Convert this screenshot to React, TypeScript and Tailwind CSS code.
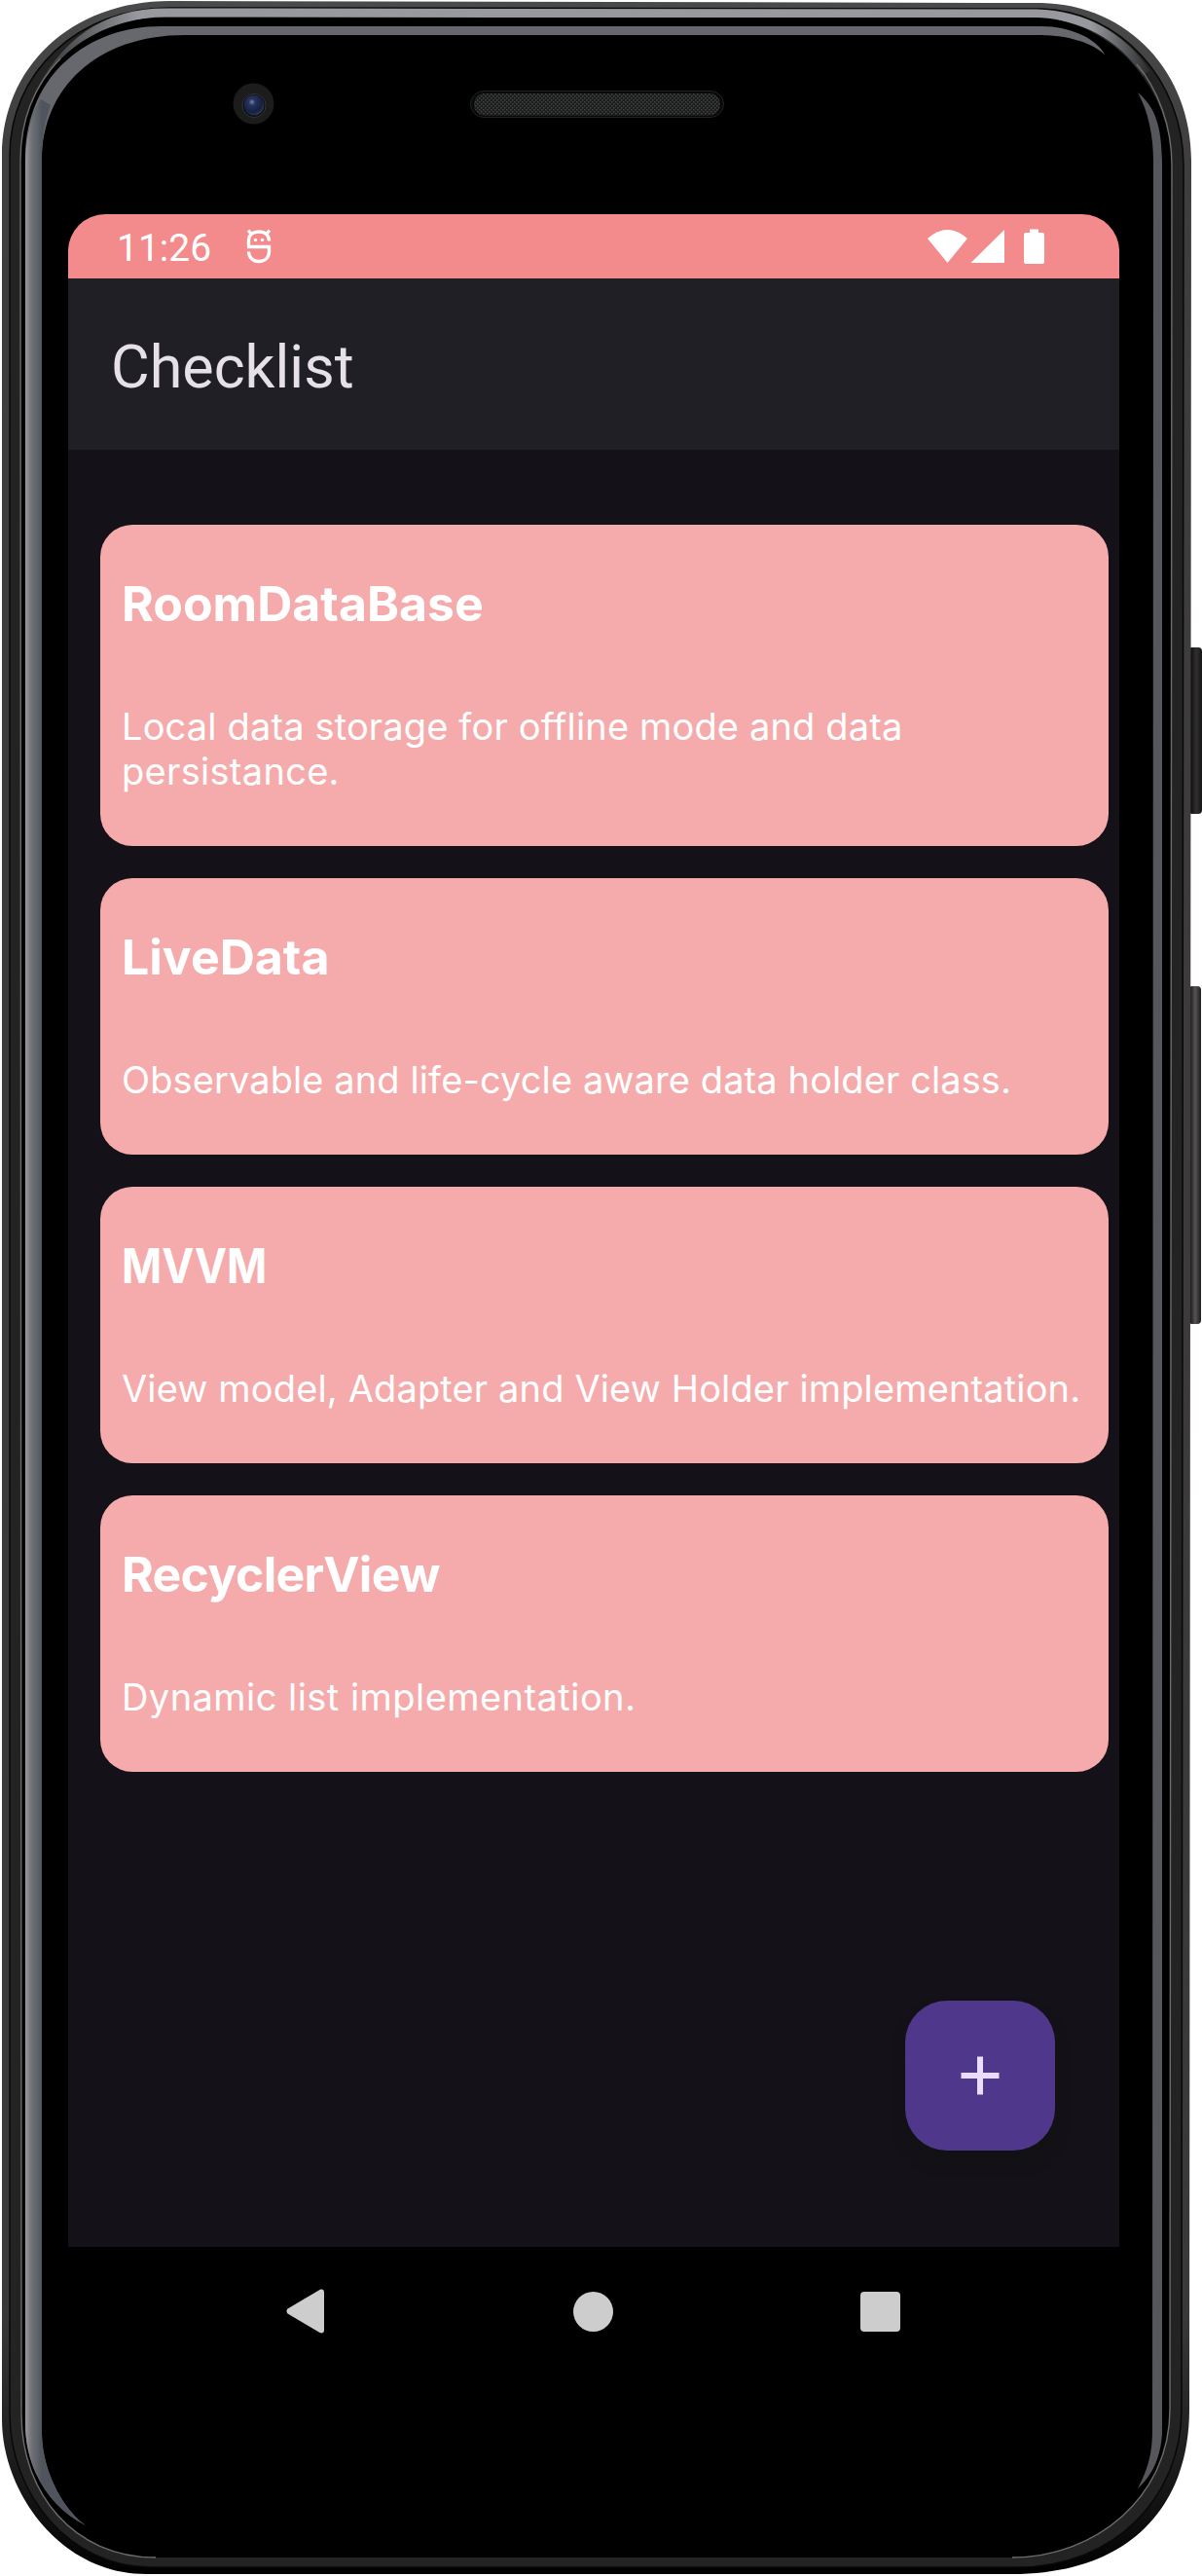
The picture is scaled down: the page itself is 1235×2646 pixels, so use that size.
import React from "react";

type Item = { title: string; lines: string[]; titleClass: string; lineClass: string[] };

const items: Item[] = [
  {
    title: "RoomDataBase",
    lines: ["Local data storage for offline mode and data", "persistance."],
    titleClass: "",
    lineClass: ["tracking-[0.15px]", "tracking-[0.3px]"],
  },
  {
    title: "LiveData",
    lines: ["Observable and life-cycle aware data holder class."],
    titleClass: "",
    lineClass: ["tracking-[0.1px]"],
  },
  {
    title: "MVVM",
    lines: ["View model, Adapter and View Holder implementation."],
    titleClass: "inline-block origin-left scale-x-[0.885]",
    lineClass: ["tracking-[0.14px]"],
  },
  {
    title: "RecyclerView",
    lines: ["Dynamic list implementation."],
    titleClass: "tracking-[-0.7px]",
    lineClass: ["tracking-[0.45px]"],
  },
];

/* The handset: body, metal rim, glass reflections, camera and speaker. */
function Handset() {
  return (
    <svg className="absolute inset-0" width="1235" height="2646" viewBox="0 0 1235 2646" fill="none">
      <defs>
        <linearGradient id="rim" x1="0" y1="0" x2="0" y2="2646" gradientUnits="userSpaceOnUse">
          <stop offset="0" stopColor="#4a4a4a" />
          <stop offset="0.06" stopColor="#3f3d3d" />
          <stop offset="0.9" stopColor="#3a3838" />
          <stop offset="0.96" stopColor="#1a1a1a" />
          <stop offset="1" stopColor="#000" />
        </linearGradient>
        <linearGradient id="topShine" x1="0" y1="100" x2="1180" y2="100" gradientUnits="userSpaceOnUse">
          <stop offset="0.03" stopColor="#2c2d2f" />
          <stop offset="0.12" stopColor="#97999e" />
          <stop offset="0.95" stopColor="#97999e" />
          <stop offset="1" stopColor="#2c2d2f" />
        </linearGradient>
        <linearGradient id="leftShine" x1="26" y1="0" x2="43" y2="0" gradientUnits="userSpaceOnUse">
          <stop offset="0" stopColor="#9a9a9a" />
          <stop offset="0.35" stopColor="#71747a" />
          <stop offset="1" stopColor="#50545c" />
        </linearGradient>
        <linearGradient id="power" x1="1223" y1="0" x2="1235" y2="0" gradientUnits="userSpaceOnUse">
          <stop offset="0" stopColor="#0c0c0c" />
          <stop offset="0.5" stopColor="#303030" />
          <stop offset="1" stopColor="#161616" />
        </linearGradient>
        <linearGradient id="volume" x1="1222" y1="0" x2="1234" y2="0" gradientUnits="userSpaceOnUse">
          <stop offset="0" stopColor="#111" />
          <stop offset="0.5" stopColor="#555" />
          <stop offset="1" stopColor="#1b1b1b" />
        </linearGradient>
        <radialGradient id="lens" cx="0.4" cy="0.35" r="0.65">
          <stop offset="0" stopColor="#7784a8" />
          <stop offset="0.25" stopColor="#27345f" />
          <stop offset="0.75" stopColor="#16203f" />
          <stop offset="1" stopColor="#2c3850" />
        </radialGradient>
        <pattern id="mesh" width="4" height="4" patternUnits="userSpaceOnUse">
          <rect width="4" height="4" fill="#1b1c1c" />
          <rect width="1.500" height="1.500" fill="#444646" />
          <rect x="2" y="2" width="1.500" height="1.500" fill="#444646" />
        </pattern>
      </defs>
      <rect x="1221" y="665" width="14" height="171" rx="4" fill="url(#power)" />
      <rect x="1221" y="1013" width="13" height="347" rx="4" fill="url(#volume)" />
      <path d="M2 160C2 70 72 1 175 1L1070 3C1160 5 1224 75 1224 165L1222 2475C1222 2575 1160 2644 1040 2644H150C62 2644 2 2560 2 2485Z" fill="url(#rim)" />
      <path d="M10 160C10 75 80 8 175 8L1070 9C1150 11 1216 82 1216 170L1214 2475C1214 2565 1145 2637 1045 2637H155C70 2637 10 2560 10 2480Z" fill="#232323" stroke="#080808" strokeWidth="1.500" />
      <path d="M36 105C62 48 105 13 170 13L1065 14C1120 16 1155 42 1178 75" stroke="url(#topShine)" strokeWidth="9" />
      <path d="M21 165C21 80 85 18 170 18H1062C1140 18 1204 90 1204 170L1202 2475C1202 2565 1125 2627 1040 2627H160C75 2627 22 2560 22 2480Z" fill="#000" />
      <path d="M160 2627C75 2627 22 2560 22 2480L21 165C21 120 38 85 62 60M1168 66C1190 92 1204 130 1204 170L1202 2475C1202 2565 1125 2627 1040 2627" stroke="#6c6c6c" strokeWidth="1.400" />
      <path d="M26 160C28 75 92 27 165 27H1070C1100 27 1127 40 1135 56C1118 41 1092 36 1065 36H190C100 36 43 90 43 165V2500C44 2540 65 2578 88 2594C50 2575 26 2535 26 2490Z" fill="#66686e" />
      <path d="M26 165C27 140 32 118 42 102L52 108C46 125 43 140 43 165V2500C44 2540 65 2578 88 2594C50 2575 26 2535 26 2490Z" fill="url(#leftShine)" />
      <path d="M1169 95C1188 111 1193 130 1194 165V2500C1192 2530 1180 2546 1169 2556C1180 2535 1184 2520 1184 2495L1185 165C1185 140 1180 115 1169 95Z" fill="#55575d" />
      <circle cx="260.500" cy="106.500" r="21" fill="#1c1c1d" />
      <circle cx="261" cy="108.500" r="12" fill="#090b10" stroke="#34363b" strokeWidth="1" />
      <circle cx="261" cy="108" r="10.500" fill="url(#lens)" />
      <rect x="483.500" y="93.500" width="260" height="27" rx="13.500" fill="#090909" stroke="#222225" />
      <rect x="487" y="96" width="253" height="22.500" rx="11" fill="url(#mesh)" />
    </svg>
  );
}

function StatusBar() {
  return (
    <div className="flex h-[66px] items-center bg-[#f38a8b] pl-[50px] pr-[77px] text-white">
      <span className="w-[133px] pt-[3px] text-[39px] leading-[66px]">11:26</span>
      <svg width="26" height="36" viewBox="0 0 26 36" fill="none" stroke="currentColor" strokeWidth="3.400">
        <path d="M2.500 18.500V12C2.500 6 7 3 13 3S23.500 6 23.500 12.500M1 18.500H23.500V23C23.500 30 19 33.500 13 33.500S2.500 29.500 2.500 23.500" />
        <path d="M2 1.500L5 5M24 1.500L21 5" />
        <circle cx="9.500" cy="11.500" r="1.800" fill="currentColor" stroke="none" />
        <circle cx="16.500" cy="11.500" r="1.800" fill="currentColor" stroke="none" />
      </svg>
      <svg className="ml-auto" width="120" height="36" viewBox="0 0 120 36" fill="currentColor">
        <path d="M0 10Q20.500 -8 41 10L20.500 35Z" />
        <path d="M44.500 35L79 1V35Z" />
        <path d="M105 .5h9v3.500h4a2 2 0 0 1 2 2v28a2 2 0 0 1-2 2h-17a2 2 0 0 1-2-2v-28a2 2 0 0 1 2-2h4z" />
      </svg>
    </div>
  );
}

function Card({ item }: { item: Item }) {
  return (
    <article className="rounded-[33px] bg-[#f5abac] px-[22px] pb-[54px] pt-[50px] font-[Inter,sans-serif] text-white">
      <h2 className="h-[62px] whitespace-nowrap text-[50px] font-bold leading-[62px]">
        <span className={item.titleClass}>{item.title}</span>
      </h2>
      <p className="mt-[72px] text-[38px] leading-[46px]">
        {item.lines.map((line, i) => (
          <span key={line} className="block h-[46px] whitespace-nowrap">
            <span className={item.lineClass[i]}>{line}</span>
          </span>
        ))}
      </p>
    </article>
  );
}

export default function App() {
  return (
    <div className="relative h-[2646px] w-[1235px] overflow-hidden bg-white pl-[70px] pt-[220px]">
      <Handset />
      <div className="relative flex h-[2250px] w-[1080px] flex-col overflow-hidden rounded-t-[38px] bg-black font-[Roboto,sans-serif]">
        <StatusBar />
        <header className="flex h-[176px] items-center bg-[#211f26] pl-[44px] pt-[7px] text-[61px] text-[#e6e0e9]">
          <h1>Checklist</h1>
        </header>
        <main className="relative flex h-[1846px] flex-col gap-[33px] bg-[#141218] pl-[33px] pr-[11px] pt-[77px]">
          {items.map((item) => (
            <Card key={item.title} item={item} />
          ))}
          <button className="absolute bottom-[99px] right-[66px] flex size-[154px] items-center justify-center rounded-[43px] bg-[#4f378b] shadow-[0_12px_14px_0_rgba(17,17,17,0.6)]">
            <svg width="40" height="40" viewBox="0 0 40 40" stroke="#eaddff" strokeWidth="6">
              <path d="M20 .5V39.500M.5 20H39.500" />
            </svg>
          </button>
        </main>
        <nav className="flex h-[132px] items-center pl-[224px]">
          <svg width="39" height="46" viewBox="0 0 39 46" fill="#cdcdcd">
            <path d="M1.500 20.500L34.500 1C37 0 39 1 39 3.500V42.500C39 45 37 46 34.500 45L1.500 25.500Q-.5 23 1.500 20.500Z" />
          </svg>
          <span className="ml-[256px] size-[41px] rounded-full bg-[#cdcdcd]" />
          <span className="ml-[254px] size-[41px] rounded-[4px] bg-[#cdcdcd]" />
        </nav>
      </div>
    </div>
  );
}
